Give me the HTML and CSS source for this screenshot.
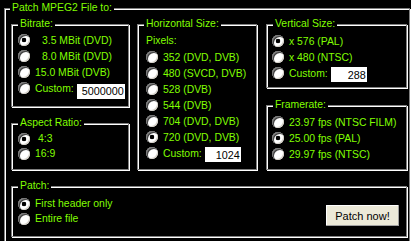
FILE: index.html
```html
<!DOCTYPE html>
<html lang="en">
<head>
<meta charset="utf-8">
<title>Patch MPEG2</title>
<link rel="stylesheet" href="styles.css">
</head>
<body>
<div class="group frame">
  <span class="cap">Patch MPEG2 File to:</span>
  <div class="cols">
    <div class="col col1">
      <div class="group bitrate">
        <span class="cap">Bitrate:</span>
        <label class="row"><input class="radio" type="radio" name="br" checked><span class="ind7">3.5 MBit (DVD)</span></label>
        <label class="row"><input class="radio" type="radio" name="br"><span class="ind7">8.0 MBit (DVD)</span></label>
        <label class="row"><input class="radio" type="radio" name="br"><span>15.0 MBit (DVB)</span></label>
        <label class="row"><input class="radio" type="radio" name="br"><span>Custom:</span><input class="edit w48 low" type="text" value="5000000"></label>
      </div>
      <div class="group aspect">
        <span class="cap">Aspect Ratio:</span>
        <label class="row s15"><input class="radio" type="radio" name="ar" checked><span class="ind3">4:3</span></label>
        <label class="row s15"><input class="radio" type="radio" name="ar"><span>16:9</span></label>
      </div>
    </div>
    <div class="group hsize">
      <span class="cap">Horizontal Size:</span>
      <div class="row r17">Pixels:</div>
      <label class="row"><input class="radio" type="radio" name="hs"><span>352 (DVD, DVB)</span></label>
      <label class="row"><input class="radio" type="radio" name="hs"><span>480 (SVCD, DVB)</span></label>
      <label class="row"><input class="radio" type="radio" name="hs"><span>528 (DVB)</span></label>
      <label class="row"><input class="radio" type="radio" name="hs"><span>544 (DVB)</span></label>
      <label class="row"><input class="radio" type="radio" name="hs"><span>704 (DVD, DVB)</span></label>
      <label class="row"><input class="radio" type="radio" name="hs" checked><span>720 (DVD, DVB)</span></label>
      <label class="row"><input class="radio" type="radio" name="hs"><span>Custom:</span><input class="edit w36" type="text" value="1024"></label>
    </div>
    <div class="col col3">
      <div class="group vsize">
        <span class="cap">Vertical Size:</span>
        <label class="row"><input class="radio" type="radio" name="vs" checked><span>x 576 (PAL)</span></label>
        <label class="row"><input class="radio" type="radio" name="vs"><span>x 480 (NTSC)</span></label>
        <label class="row"><input class="radio" type="radio" name="vs"><span>Custom:</span><input class="edit w36" type="text" value="288"></label>
      </div>
      <div class="group framerate">
        <span class="cap">Framerate:</span>
        <label class="row"><input class="radio" type="radio" name="fr"><span>23.97 fps (NTSC FILM)</span></label>
        <label class="row"><input class="radio" type="radio" name="fr" checked><span>25.00 fps (PAL)</span></label>
        <label class="row"><input class="radio" type="radio" name="fr"><span>29.97 fps (NTSC)</span></label>
      </div>
    </div>
  </div>
  <div class="group patch">
    <span class="cap">Patch:</span>
    <div class="opts">
      <label class="row s15"><input class="radio" type="radio" name="pt" checked><span>First header only</span></label>
      <label class="row s15"><input class="radio" type="radio" name="pt"><span>Entire file</span></label>
    </div>
    <button class="btn" type="button">Patch now!</button>
  </div>
</div>
</body>
</html>
```
FILE: styles.css
```css
* { box-sizing: border-box; }
html, body { margin: 0; background: #000; }
body {
  width: 411px;
  height: 241px;
  overflow: hidden;
  padding: 8px 0 0 4px;
  font-family: "Liberation Sans", Arial, sans-serif;
  font-size: 10.4px;
  color: #80ff00;
}
.group {
  position: relative;
  border: 1px solid #808080;
  box-shadow: inset 1px 1px 0 #fff, 1px 1px 0 #fff;
}
.cap {
  position: absolute;
  top: -7px;
  left: 6px;
  padding: 0 2px;
  line-height: 12px;
  background: #000;
  white-space: nowrap;
}
.frame {
  width: 406px;
  height: 240px;
  padding: 15px 0 0 6px;
}
.frame > .cap { left: 5px; }
.cols { display: flex; height: 146px; }
.col { display: flex; flex-direction: column; }
.col1 { width: 118px; }
.col3 { width: 141px; }
.bitrate { height: 83px; padding: 7px 0 0 6px; }
.aspect { height: 47px; margin-top: 16px; padding: 7px 0 0 6px; }
.hsize { width: 120px; height: 146px; margin: 0 9px 0 8px; padding: 7px 0 0 8px; }
.vsize { height: 64px; padding: 8px 0 0 5px; }
.framerate { height: 65px; margin-top: 17px; padding: 8px 0 0 5px; }
.patch {
  width: 396px;
  height: 51px;
  margin-top: 16px;
  padding: 9px 7px 0 6px;
  display: flex;
  justify-content: space-between;
  align-items: flex-start;
}
.row {
  display: flex;
  align-items: center;
  height: 16px;
  white-space: pre;
}
.row.s15 { height: 15px; }
.row.r17 { height: 17px; }
.ind7 { padding-left: 7px; }
.ind3 { padding-left: 3px; }
.radio {
  -webkit-appearance: none;
  appearance: none;
  flex: none;
  width: 12px;
  height: 12px;
  margin: 0 5px 0 0;
  border-radius: 50%;
  background: #fff;
  box-shadow: inset 1px 1px 0 #808080, inset 2px 2px 0 #404040, inset -1px -1px 0 #d4d0c8;
}
.radio:checked {
  background: radial-gradient(circle at 50% 50%, #000 0 2px, #fff 2.6px);
}
.edit {
  flex: none;
  height: 15px;
  margin: 3px 0 0 3px;
  padding: 0 1px 0 0;
  border: 0;
  outline: none;
  background: #fff;
  color: #000;
  font-family: "Liberation Sans", Arial, sans-serif;
  font-size: 10.8px;
  text-align: right;
}
.edit.low { margin-top: 6px; }
.w48 { width: 48px; }
.w36 { width: 36px; }
.btn {
  width: 73px;
  height: 21px;
  margin-top: 9px;
  padding: 0;
  border: 0;
  background: #ece9d8;
  color: #000;
  font-family: "Liberation Sans", Arial, sans-serif;
  font-size: 11px;
  box-shadow: inset -1px -1px 0 #a0a0a0, inset 1px 1px 0 #fff;
}
```
